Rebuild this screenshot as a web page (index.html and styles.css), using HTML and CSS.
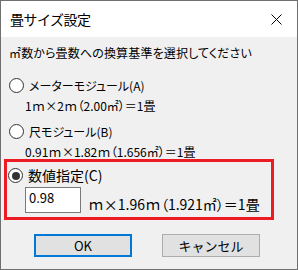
FILE: index.html
```html
<!DOCTYPE html>
<html lang="ja">
<head>
    <meta charset="UTF-8">
    <title>畳サイズ設定</title>
    <link rel="stylesheet" href="styles.css">
</head>
<body>
    <div class="dialog">
        <div class="titlebar">
            <span class="title">畳サイズ設定</span>
            <svg class="close" width="11" height="11" viewBox="0 0 11 11">
                <path d="M0.5 0.5 L10.5 10.5 M10.5 0.5 L0.5 10.5" stroke="#000" stroke-width="1" fill="none"/>
            </svg>
        </div>

        <div class="content">
            <p class="prompt">㎡数から畳数への換算基準を選択してください</p>

            <label class="option"><span class="radio"></span>メーターモジュール(A)</label>
            <p class="formula">1ｍ×2ｍ（2.00㎡）＝1畳</p>

            <label class="option"><span class="radio"></span>尺モジュール(B)</label>
            <p class="formula">0.91ｍ×1.82ｍ（1.656㎡）＝1畳</p>

            <div class="custom">
                <label class="option big"><span class="radio checked"></span>数値指定(C)</label>
                <div class="custom-row">
                    <input type="text" class="ratio" value="0.98">
                    <span class="custom-text">ｍ×1.96ｍ（1.921㎡）＝1畳</span>
                </div>
            </div>

            <div class="buttons">
                <button class="btn default">OK</button>
                <button class="btn">キャンセル</button>
            </div>
        </div>
    </div>
</body>
</html>
```

FILE: styles.css
```css
body {
    margin: 0;
    font-family: "Noto Sans CJK JP", "Noto Sans", sans-serif;
    color: #000;
}

.dialog {
    width: 298px;
    height: 270px;
    box-sizing: border-box;
    border: 1px solid #6f6f6f;
    background-color: #f0f0f0;
    display: flex;
    flex-direction: column;
}

.titlebar {
    height: 36px;
    background-color: #fff;
    display: flex;
    align-items: center;
    justify-content: space-between;
    padding: 0 15px 0 9px;
}

.title {
    font-size: 14px;
    letter-spacing: -0.5px;
    line-height: 16px;
}

.close {
    display: block;
}

.content {
    flex: 1;
    font-size: 12px;
    font-feature-settings: "palt";
}

.prompt {
    margin: 8px 0 0 8px;
    line-height: 16px;
    height: 16px;
    letter-spacing: 0.15px;
}

.option {
    display: flex;
    align-items: center;
    height: 17px;
    line-height: 17px;
    margin: 16px 0 0 8px;
}

.option + .formula {
    margin-top: 5px;
}

.formula + .option {
    margin-top: 10px;
}

.radio {
    width: 13px;
    height: 13px;
    border: 1px solid #333;
    border-radius: 50%;
    background-color: #fff;
    margin-right: 5px;
    display: flex;
    align-items: center;
    justify-content: center;
}

.radio.checked::after {
    content: "";
    width: 8px;
    height: 8px;
    border-radius: 50%;
    background-color: #333;
}

.formula {
    margin: 0 0 0 24px;
    height: 14px;
    line-height: 14px;
}

.custom {
    margin: 0 0 0 3px;
    width: 270px;
    height: 61px;
    box-sizing: border-box;
    border: 3px solid #ed1c24;
    padding: 5px 0 4px 0;
}

.custom .option {
    margin: 0 0 0 1px;
}

.big {
    font-size: 14px;
}

.custom-row {
    display: flex;
    align-items: flex-end;
    margin: 3px 0 0 18px;
}

.ratio {
    width: 56px;
    height: 26px;
    box-sizing: border-box;
    border: 1px solid #7a7a7a;
    padding: 0 0 5px 3px;
    margin: 0;
    font-family: "Noto Sans CJK JP", sans-serif;
    font-size: 13px;
    background-color: #fff;
    outline: none;
}

.custom-text {
    font-size: 14px;
    line-height: 16px;
    margin: 0 0 1px 7px;
}

.buttons {
    display: flex;
    gap: 30px;
    margin: 14px 0 0 33px;
}

.btn {
    width: 98px;
    height: 23px;
    box-sizing: border-box;
    border: 1px solid #adadad;
    background-color: #e1e1e1;
    font-family: "Noto Sans CJK JP", sans-serif;
    font-size: 13px;
    padding: 0;
    margin: 0;
}

.btn.default {
    border: 2px solid #0078d7;
}
```
